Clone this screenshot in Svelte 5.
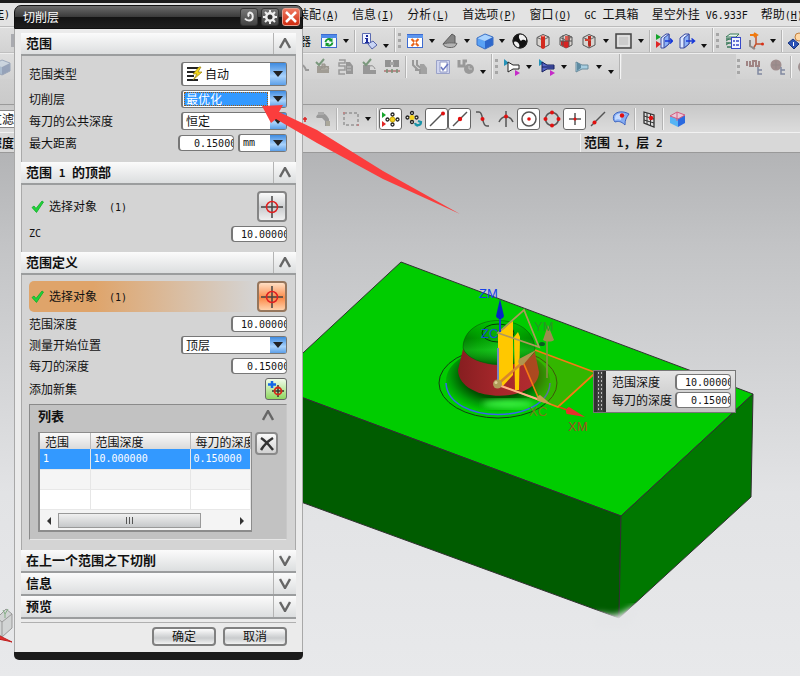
<script lang="ts">
  interface Tool {
    icon?: string;
    text?: string;
    kind?: 'icon' | 'drop' | 'more' | 'sep' | 'end' | 'grip' | 'text' | 'stub' | 'space';
    label?: string;
    on?: boolean;
  }

  const cubeWire =
    '<path d="M3 5.5 9 2.5l6 2.5v8L9 16l-6-3z" fill="#d8d4d0" stroke="#555"/><path d="M3 5.5 9 8l6-3M9 8v8" fill="none" stroke="#666"/>';

  const icons: Record<string, string> = {
    refresh:
      '<rect x="1.5" y="2.5" width="15" height="13" fill="#f4f8ff" stroke="#3d6bd0"/><path d="M1 3h16v3H1z" fill="#4f8bea"/><path d="M5.5 10a3.5 3.5 0 0 1 6-2M12.500 10.500a3.500 3.500 0 0 1-6 2" fill="none" stroke="#14992c" stroke-width="2"/><path d="M12.500 6v4l-4-1zM5.500 14.500v-4l4 1z" fill="#14992c"/>',
    info: '<path d="M2.500 1.500h8v10h-8z" fill="#eef2ff" stroke="#5a6ab0"/><path d="M6 3h2v2H6zM5 6h3v4h1v1H5v-1h1V7H5z" fill="#1c2c9c"/><path d="m8 12 5-3 4 4-5 4z" fill="#c8d4f4" stroke="#5563a8"/>',
    fit: '<rect x="1.500" y="2.500" width="15" height="13" fill="#fff" stroke="#3d6bd0"/><path d="M1 3h16v3H1z" fill="#5c95ee"/><path d="m5.500 7 7 7M12.500 7l-7 7" stroke="#e8641c" stroke-width="2.200"/><path d="M8 9.500h2v2H8z" fill="#fff"/>',
    cone: '<path d="M2 12 11 2l3 2v7l-6 4z" fill="#858585" stroke="#5a5a5a"/><path d="M2 12.500c2-2 11-2 14-1l-2 3c-4 2-10 1-12-2z" fill="#b4b4b4" stroke="#666"/>',
    cube: '<path d="m1 6 8-4 8 3-8 4z" fill="#a9d3ff"/><path d="m1 6 8 3v8l-8-4z" fill="#5aa2f5"/><path d="m9 9 8-4v8l-8 4z" fill="#2e68cc"/><path d="m1 6 8-4 8 3v8l-8 4-8-4z" fill="none" stroke="#3a6fc4"/>',
    ball: '<circle cx="9" cy="9" r="7.500" fill="#111"/><path d="M9 2c5 0 7 4 6 7-2-2-4-1-5 0-2-2-3-5-1-7zM3 10c2-1 4 0 5 2s0 4-1 4c-3-1-4-3-4-6z" fill="#f0f0f0"/><circle cx="9" cy="9" r="7" fill="none" stroke="#222"/>',
    cubeBar: cubeWire + '<path d="M7 4h4v12l-2 1-2-1z" fill="#d32a1e"/><path d="M7 4l2-1 2 1-2 1z" fill="#f48b80"/>',
    cubeRed: cubeWire + '<path d="M4 9h8v6l-3 1-5-3z" fill="#d82222"/><path d="M8 4h5v5H8z" fill="#e05a50"/><path d="M6 3v11M12 3v12M3 9h12" stroke="#555" fill="none"/>',
    cubeCut: cubeWire + '<path d="M8 4h3v10l-2 1-1-2z" fill="#b82a20"/><path d="M5 8h6" stroke="#d04030" stroke-width="2"/>',
    square: '<rect x="1" y="2" width="15" height="14" fill="#ccc" stroke="#444" stroke-width="1.500"/><rect x="3" y="4" width="11" height="10" fill="none" stroke="#eee"/>',
    layerIn: '<path d="m6 6 5-4h3v10l-5 4H6z" fill="#dbe7ff" stroke="#3a4aa0"/><path d="m9 6 5-4v10l-5 4z" fill="#8cb2f8" stroke="#3a4aa0"/><path d="M1 2l5 3-5 3z" fill="#16a52c"/><path d="M1 9l5 3-5 4z" fill="#e02525"/><path d="M10 9h7M15 6.500 17.500 9 15 11.500" stroke="#1436d8" fill="none" stroke-width="1.500"/>',
    layerOut: '<path d="m2 6 5-4h4v10l-5 4H2z" fill="#dbe7ff" stroke="#3a4aa0"/><path d="m6 6 5-4v10l-5 4z" fill="#8cb2f8" stroke="#3a4aa0"/><path d="M8 9h8M13.500 6.500l3 2.500-3 2.500" stroke="#1436d8" fill="none" stroke-width="1.500"/>',
    stack: '<path d="m2 5 4-3h9l-3 3zM2 9l3-2M2 13l3-2" fill="#e8f4ec" stroke="#3a7a5a"/><path d="M2 7h6M2 11h6M3 15h5" stroke="#3a7a5a" stroke-width="1.500"/><rect x="7.500" y="5.500" width="9" height="11" fill="#eef2ff" stroke="#3648c8"/><path d="M9 9h2m1 0h3m-6 4h2m1 0h3" stroke="#3648c8" stroke-width="1.500"/>',
    axes: '<path d="M9 3v9h7M9 12l-3 5" stroke="#c2522f" fill="none" stroke-width="1.500"/><path d="M3 3h6M7 1l3 2-3 2" stroke="#f07a10" fill="none" stroke-width="2"/><path d="M3 8v6l5 3" stroke="#8a8a8a" fill="none" stroke-width="2"/><circle cx="15.500" cy="12" r="1.500" fill="#d83018"/>',
    infoBall: '<path d="m1 11 5-4 6 5-5 5z" fill="#2b53b6" stroke="#18357c"/><path d="M6 10h1v4H6z" fill="#fff"/><circle cx="12" cy="5" r="4" fill="#ffd9a8" stroke="#c08040"/>',
    gTree: '<path d="M3 8h12v7H3z" fill="#a09c94"/><path d="m2 4 3 3 5-6" stroke="#7a987c" fill="none" stroke-width="2"/><path d="M6 12c3-5 7-5 9-1M8 6h3v4H8z" stroke="#95918a" fill="#b0aca4"/>',
    gList: '<path d="M2 2h6v3H2v3h6v4H2v4h6" fill="none" stroke="#9a9a9a" stroke-width="1.500"/><path d="M9 4h4l3 4v8H9z" fill="#979797"/><path d="M10 9h4m-4 3h4" stroke="#c8c8c8"/>',
    gVerify: '<path d="M3 7h7v9H3zM10 12h6v4h-6z" fill="#979797"/><path d="m3 4 3 3 5-6" stroke="#7a987c" fill="none" stroke-width="2"/><path d="M10 8c3-1 4 1 5 3" stroke="#888" fill="none"/>',
    gPost: '<path d="M2 2h6v7H2zM10 2h6v7h-6z" fill="#929292"/><path d="M1 13h16" stroke="#b07070" stroke-width="1.500"/><path d="M4 11v4M9 11v4M14 11v4" stroke="#769076" stroke-width="1.500"/><path d="M7 4h4v3H7z" fill="#a6a6a6"/>',
    gMove: '<path d="M2 2v5l5 5M6 2v5l5 4" stroke="#999" fill="none" stroke-width="2"/><path d="M9 6h4l3 4v6H9z" fill="#a2a2a2"/><path d="M4 12h5v4" stroke="#999" fill="none" stroke-width="2"/>',
    gDoc: '<path d="M2.500 2.500h13v13h-13z" fill="#cfd4ee" stroke="#9aa2c8"/><path d="M6 4h7v10H6z" fill="#fff" stroke="#8f98c4"/><path d="m7 9 2 3 5-6" stroke="#6b78c0" fill="none" stroke-width="1.500"/>',
    gClock: '<path d="M2 2v6h5V3h3" stroke="#999" fill="none" stroke-width="3"/><circle cx="12" cy="11" r="5" fill="#999"/><path d="M12 8v3h3" stroke="#c6c6c6" fill="none"/>',
    horn: '<path d="M1 1v7l5-3z" fill="#2592b8"/><path d="M5 4v10l5-3h6V7h-6z" fill="#fdfdfd" stroke="#222"/><path d="m12 12 5 3-5 3z" fill="#c52ac8"/>',
    hornBlue: '<path d="M1 1v7l5-3z" fill="#2592b8"/><path d="M4 4v10l5-3h7V7H9z" fill="#5866c8" stroke="#16205e"/><path d="M4 9h12" stroke="#16205e"/><path d="m12 12 5 3-5 3z" fill="#c52ac8"/>',
    hornPale: '<path d="M3 4v10l6-3h6V7H9z" fill="#a8cfe2" stroke="#6b8c9c"/><path d="M4 4v9l4-3V7z" fill="#5e8ba2"/>',
    gWave: '<path d="M2 3v5M5 3v5h3V3h3v5h3V3" stroke="#a08484" stroke-width="2" fill="none"/><path d="M13 9v7h4M13 12h4" stroke="#8088a0" stroke-width="1.500" fill="none"/>',
    gGear: '<circle cx="8" cy="7" r="5.500" fill="#a08e8e"/><path d="M4 7h8M8 3v8" stroke="#938888"/><path d="M13 9v7h4M13 12h4" stroke="#8088a0" stroke-width="1.500" fill="none"/>',
    gBlob: '<circle cx="8" cy="9" r="6" fill="#a09292"/>',
    gHook: '<path d="M8 7c3 0 4 2 5 5h3" stroke="#999" fill="none" stroke-width="2"/>',
    redTip: '<path d="M9 9h5M12 7v5" stroke="#d22" stroke-width="1.500"/>',
    gFaucet: '<path d="M2 7c2-5 8-5 11-1l2 3v7h-4v-5l-3-3H3z" fill="#999"/><path d="M4 2h6v3H4z" fill="#aaa"/><path d="M12 11h4v5h-4z" fill="#aaa79a"/>',
    marquee: '<rect x="2" y="3" width="14" height="12" fill="none" stroke="#777" stroke-dasharray="3 2"/><path d="M1 2h2v2H1zM15 14h2v2h-2z" fill="#b88"/>',
    snap: '<path d="M0 2l4 3-4 3z" fill="#16a52c"/><path d="M0 11l4 3-4 3z" fill="#e02525"/><path d="M10.500 4v11M5 9.500h11" stroke="#777"/><g fill="#fff" stroke="#222" stroke-width="1.300"><circle cx="10.500" cy="4.500" r="1.500"/><circle cx="10.500" cy="14.500" r="1.500"/><circle cx="5.500" cy="9.500" r="1.500"/><circle cx="15.500" cy="9.500" r="1.500"/></g><circle cx="10.500" cy="9.500" r="2.500" fill="#f5d31d" stroke="#c8a80c"/>',
    snapSet: '<path d="M7 2v11M2 7h11" stroke="#777"/><g fill="#eee" stroke="#222" stroke-width="1.300"><circle cx="7" cy="3" r="1.500"/><circle cx="7" cy="12" r="1.500"/><circle cx="2.500" cy="7.500" r="1.500"/><circle cx="11.500" cy="7.500" r="1.500"/></g><circle cx="7" cy="7.500" r="2.500" fill="#f5d31d"/><path d="M10 13c1 3 6 3 6-1l-3-1m0 5-3-2" fill="none" stroke="#1893a8" stroke-width="2.200"/>',
    lineEnd: '<path d="M2 16 14 4" stroke="#555" stroke-width="1.500"/><circle cx="15" cy="3.500" r="2" fill="#e01010"/>',
    lineMid: '<path d="M2 16 16 2" stroke="#555" stroke-width="1.500"/><circle cx="9" cy="9" r="2.200" fill="#e01010"/>',
    curve: '<path d="M2 2h3c5 0 2 14 8 14h2" fill="none" stroke="#555" stroke-width="1.500"/><circle cx="8.500" cy="9" r="2" fill="#e01010"/>',
    cross: '<path d="M9 1v16M2 12c3-7 11-7 14 0" fill="none" stroke="#555" stroke-width="1.500"/><circle cx="9" cy="6.500" r="2" fill="#e01010"/>',
    center: '<circle cx="9" cy="9" r="7" fill="none" stroke="#555" stroke-width="1.500"/><circle cx="9" cy="9" r="1.800" fill="#e01010"/>',
    quad: '<circle cx="9" cy="9" r="6.500" fill="none" stroke="#555" stroke-width="1.500"/><g fill="#e01010"><circle cx="9" cy="2.500" r="2"/><circle cx="9" cy="15.500" r="2"/><circle cx="2.500" cy="9" r="2"/><circle cx="15.500" cy="9" r="2"/></g>',
    point: '<path d="M9 3v12M3 9h12" stroke="#555" stroke-width="1.500"/><circle cx="9" cy="9" r="1.500" fill="#e01010"/>',
    onCurve: '<path d="M2 16 16 2" stroke="#555" stroke-width="1.500"/><circle cx="5.500" cy="12.500" r="2" fill="#e01010"/>',
    surface: '<path d="M2 5c3-4 10-4 15-1-3 4-4 6-4 11C9 11 6 11 3 12 1 10 1 7 2 5z" fill="#86adf2" stroke="#3e64c0"/><path d="M4 5c3-2 7-2 9-1-3 2-4 4-4 6-2-1-4-1-6 0 0-2 0-4 1-5z" fill="#c5dbff"/><circle cx="10" cy="5.500" r="2.200" fill="#e01010"/>',
    mesh: '<path d="m4 2 10 3v12L4 13z" fill="#ddd" stroke="#333" stroke-width="1.300"/><path d="m7 3v11M10.500 4v12M4 6l10 3M4 10l10 3" stroke="#333"/><circle cx="11" cy="8" r="2.200" fill="#e01010"/>',
    shaded: '<path d="m2 6 7-4 8 3-7 4z" fill="#eac6d6"/><path d="m2 6 8 3v8l-8-4z" fill="#56b4f4"/><path d="m10 9 7-4v8l-7 4z" fill="#2b6adf"/><path d="m2 6 7-4 8 3-7 4zM9 2v9" fill="none" stroke="#d65c80"/>'
  };

  const sep: Tool = { kind: 'sep' };
  const drop: Tool = { kind: 'drop' };
  const more: Tool = { kind: 'more' };
  const end: Tool = { kind: 'end' };
  const grip: Tool = { kind: 'grip' };

  const viewTools: Tool[] = [
    { kind: 'text', text: '器' },
    { icon: 'refresh', label: '刷新' }, drop, sep,
    { icon: 'info', label: '对象信息' }, more, end, grip,
    { icon: 'fit', label: '适合窗口' }, drop,
    { icon: 'cone', label: '方位' }, drop,
    { icon: 'cube', label: '着色' }, drop,
    { icon: 'ball', label: '真实着色' },
    { icon: 'cubeBar', label: '剖切截面' },
    { icon: 'cubeRed', label: '编辑截面' },
    { icon: 'cubeCut', label: '显示截面' }, drop,
    { icon: 'square', label: '背景' }, drop, sep,
    { icon: 'layerIn', label: '移动至图层' },
    { icon: 'layerOut', label: '图层设置' }, more, end, grip,
    { icon: 'stack', label: '图层' },
    { icon: 'axes', label: '坐标系' }, drop, sep,
    { icon: 'infoBall', label: '信息' }
  ];

  const camTools: Tool[] = [
    { kind: 'stub', icon: 'gHook' },
    { icon: 'gTree', label: '生成刀轨' },
    { icon: 'gList', label: '列出刀轨' },
    { icon: 'gVerify', label: '确认刀轨' },
    { icon: 'gPost', label: '机床仿真' }, sep,
    { icon: 'gMove', label: '后处理' },
    { icon: 'gDoc', label: '车间文档' },
    { icon: 'gClock', label: '进给率' }, more, end, grip,
    { icon: 'horn', label: '创建刀具' }, drop,
    { icon: 'hornBlue', label: '创建工序' }, drop,
    { icon: 'hornPale', label: '创建几何体' }, drop, more, end,
    { kind: 'space' }, grip,
    { icon: 'gWave', label: '分析' },
    { icon: 'gGear', label: '工件' }, sep,
    { icon: 'gBlob', label: '更多' }
  ];

  const snapTools: Tool[] = [
    { kind: 'stub', icon: 'redTip' },
    { icon: 'gFaucet', label: '选择意图' }, sep,
    { icon: 'marquee', label: '矩形选择' }, drop, sep,
    { icon: 'snap', label: '启用捕捉点', on: true },
    { icon: 'snapSet', label: '清除捕捉点' },
    { icon: 'lineEnd', label: '端点', on: true },
    { icon: 'lineMid', label: '中点', on: true },
    { icon: 'curve', label: '控制点' },
    { icon: 'cross', label: '交点' },
    { icon: 'center', label: '圆弧中心', on: true },
    { icon: 'quad', label: '象限点' },
    { icon: 'point', label: '现有点', on: true },
    { icon: 'onCurve', label: '点在曲线上' },
    { icon: 'surface', label: '点在面上' }, sep,
    { icon: 'mesh', label: '小平面顶点' }, sep,
    { icon: 'shaded', label: '着色视图' }
  ];

  const menus = [
    { text: '装配', key: 'A' },
    { text: '信息', key: 'I' },
    { text: '分析', key: 'L' },
    { text: '首选项', key: 'P' },
    { text: '窗口', key: 'O' },
    { before: 'GC ', text: '工具箱' },
    { text: '星空外挂', after: ' V6.933F' },
    { text: '帮助', key: 'H' }
  ];

  let cutDepth = $state('  0.150000');
  let topZc = $state(' 10.000000');
  let rangeDepth = $state(' 10.000000');
  let perCut = $state('  0.150000');

  const rows = [{ id: '1', depth: '10.000000', cut: '0.150000' }];
  const closed = ['在上一个范围之下切削', '信息', '预览'];
</script>

{#snippet glyph(name: string)}
  <svg width="18" height="18" viewBox="0 0 18 18" aria-hidden="true">{@html icons[name]}</svg>
{/snippet}

{#snippet tools(list: Tool[])}
  {#each list as t}
    {#if t.kind === 'text'}
      <span class="cell-text">{t.text}</span>
    {:else if t.kind === 'stub'}
      <span class="stub">{@render glyph(t.icon ?? '')}</span>
    {:else if t.kind === 'drop' || t.kind === 'more'}
      <button type="button" class="drop" class:low={t.kind === 'more'} aria-label="更多选项"></button>
    {:else if t.kind}
      <span class={t.kind}></span>
    {:else}
      <button type="button" class="tool" class:on={t.on} aria-label={t.label}>{@render glyph(t.icon ?? '')}</button>
    {/if}
  {/each}
{/snippet}

{#snippet caret(open: boolean)}
  <svg class="caret" width="12" height="11" viewBox="0 0 12 11" aria-hidden="true">
    <path d={open ? 'M1 10 6 1l5 9' : 'M1 1l5 9 5-9'} fill="none" stroke="#666" stroke-width="2.400" />
  </svg>
{/snippet}

{#snippet header(before: string, num: string, after: string, open: boolean)}
  <button type="button" class="head" aria-expanded={open}>
    <span class="head-text">{before}{#if num}<span class="num">{num}</span>{/if}{after}</span>
    <span class="head-caret">{@render caret(open)}</span>
  </button>
{/snippet}

{#snippet target()}
  <svg width="22" height="22" viewBox="0 0 22 22" aria-hidden="true">
    <path d="M11 0v22M0 11h22" stroke="#444" stroke-width="1.500" />
    <circle cx="11" cy="11" r="5.500" fill="none" stroke="#e02020" stroke-width="1.500" />
  </svg>
{/snippet}

{#snippet check()}
  <svg class="check" width="13" height="13" viewBox="0 0 13 13" aria-hidden="true">
    <path d="M1 7.500 3 6l2 2.500L11 1l1.500 1L5.500 12.500z" fill="#1fd63a" stroke="#12a828" stroke-width=".8" />
  </svg>
{/snippet}

<div class="app">
  <nav class="bar menubar">
    <div class="edge"><a href="#edit" class="mono">(<u>E</u>)</a></div>
    <div class="main menus">
      {#each menus as m}
        <a href="#menu">{#if m.before}<span class="mono">{m.before}</span>{/if}{m.text}{#if m.key}<span class="mono">(<u>{m.key}</u>)</span>{/if}{#if m.after}<span class="mono">{m.after}</span>{/if}</a>
      {/each}
    </div>
  </nav>
  <div class="bar tools">
    <div class="edge"><span class="edge-box"></span></div>
    <div class="main">{@render tools(viewTools)}</div>
  </div>
  <div class="bar tools line">
    <div class="edge faded">{@render glyph('cube')}</div>
    <div class="main">{@render tools(camTools)}</div>
  </div>
  <div class="bar blank"></div>
  <div class="bar snap">
    <div class="edge"><span class="filter">过滤</span></div>
    <div class="main">{@render tools(snapTools)}</div>
  </div>
  <div class="bar status">
    <div class="edge"><b>深度</b></div>
    <div class="main"><b class="cue">范围<span class="num">{' 1'}</span>，层<span class="num">{' 2'}</span></b></div>
  </div>

  <main class="view">
    <svg class="scene" viewBox="0 153 800 523" aria-label="模型">
      <defs>
        <linearGradient id="dome" x1="0" x2="1">
          <stop offset="0" stop-color="#006600" />
          <stop offset=".2" stop-color="#009000" />
          <stop offset=".5" stop-color="#10b414" />
          <stop offset=".8" stop-color="#009800" />
          <stop offset="1" stop-color="#007400" />
        </linearGradient>
        <linearGradient id="domeTop" x1="0" x2="0" y1="0" y2="1">
          <stop offset="0" stop-color="#00c400" />
          <stop offset=".4" stop-color="#00a400" stop-opacity=".4" />
          <stop offset=".66" stop-color="#20d826" stop-opacity=".5" />
          <stop offset="1" stop-color="#005000" stop-opacity=".8" />
        </linearGradient>
        <linearGradient id="wall" x1="0" x2="1">
          <stop offset="0" stop-color="#861e20" />
          <stop offset=".45" stop-color="#a3262a" />
          <stop offset="1" stop-color="#b42c30" />
        </linearGradient>
        <radialGradient id="fillet" cx=".5" cy=".42" r=".56">
          <stop offset=".6" stop-color="#005200" />
          <stop offset=".82" stop-color="#009a06" />
          <stop offset="1" stop-color="#00cc00" />
        </radialGradient>
        <filter id="soft"><feGaussianBlur stdDeviation="3" /></filter>
      </defs>

      <g stroke="#303030" stroke-linejoin="round">
        <path d="M401 262 753 394 621 516 290 393V365z" fill="#00cc00" />
        <path d="M290 393 621 516 619 618 290 498z" fill="#005c00" />
        <path d="M621 516 753 394 751 497 619 618z" fill="#007800" />
      </g>
      <path d="M592 616c10-6 16 2 27-2 8-3 13-9 22-8l-12 22h-34z" fill="#e5e6e8" filter="url(#soft)" />

      <ellipse cx="498" cy="383" rx="59" ry="35" fill="none" stroke="#124012" />
      <ellipse cx="498" cy="381" rx="52" ry="33" fill="url(#fillet)" />
      <ellipse cx="508" cy="404" rx="26" ry="5" fill="#38f23e" filter="url(#soft)" />
      <path d="M446 383c2 42 102 42 104 0" fill="none" stroke="#3a62f0" stroke-width="1.500" />
      <path d="M464 345 458 370c1 34 80 34 81 2l-5-24z" fill="url(#wall)" />
      <path d="M463 348c0-37 72-37 72 2-7 22-66 18-72-2z" fill="url(#dome)" />
      <path d="M463 348c0-37 72-37 72 2-7 22-66 18-72-2z" fill="url(#domeTop)" stroke="#0a520a" stroke-width=".5" />
      <ellipse cx="498" cy="333" rx="16" ry="9" fill="none" stroke="#063c06" />

      <path d="M535 350 594 372v3L558 407 540 398 523 362z" fill="#a08a00" fill-opacity=".32" />
      <path d="M535 350 594 372M594 374 558 407 497 384M523 362l15 35" fill="none" stroke="#f57a14" stroke-width="1.700" />
      <path d="M498 334 509 324l4-3v54l-10 11-5-4z" fill="#ffc800" />
      <path d="M514 337l4-5 2 5-1 53h-4z" fill="#ffc800" />
      <path d="M498 348v34" stroke="#7a84c0" stroke-width="2" />
      <path d="M498 333 524 310 539 347z" fill="none" stroke="#b0985c" stroke-width="1.700" />
      <ellipse cx="542" cy="344" rx="3" ry="2" fill="#0b5c20" />
      <path d="M500 303v29" stroke="#1c38d8" stroke-width="2" />
      <path d="M500 299l4 17c-1 4-7 4-8 0z" fill="#0626c4" />
      <path d="M547 340v38" stroke="#8c8a48" stroke-width="1.600" />
      <path d="M548 325l6 15c-2 2-8 2-11 0z" fill="#9c8c50" />
      <path d="M498 384 522 363" stroke="#d9862c" stroke-width="2.500" />
      <path d="M536 350 519 359c-2 4 1 7 4 6z" fill="#b0944e" />
      <path d="M501 386 540 400" stroke="#ffb08c" stroke-width="2" />
      <path d="M552 405 540 395c-3 1-4 4-2 6z" fill="#c6a050" />
      <path d="M559 407 570 411" stroke="#e54012" stroke-width="1.500" />
      <path d="M585 417 569 407c-3 1-4 5-2 7z" fill="#e8302c" />
      <circle cx="497.500" cy="384" r="4.500" fill="#b09a58" />
      <circle cx="496" cy="382.500" r="1.500" fill="#e0cf98" />
      <g class="axis">
        <text x="479" y="298" fill="#1440e8">ZM</text>
        <text x="481" y="338" fill="#1450d8">ZC</text>
        <text x="534" y="331" fill="#2a9426">YM</text>
        <text x="529" y="416" fill="#7a7a18">XC</text>
        <text x="568" y="431" fill="#a04e20">XM</text>
      </g>

      <path d="M-3 618 6 609l6 5v14L2 637l-5-4z" fill="#d2d4d4" stroke="#999" />
      <path d="M-3 618 2 622 12 614M2 622v15" fill="none" stroke="#999" />
      <path d="M-2 635l14 7-4-1-10-2z" fill="#e03030" stroke="#c02020" />
      <path d="M3 610l2 4 3-5M5 614v4" fill="none" stroke="#83ad83" />
    </svg>

    <form class="hud">
      <span class="hud-grip"></span>
      <div class="hud-rows">
        <label for="hud-depth">范围深度</label>
        <input id="hud-depth" class="num-in" bind:value={rangeDepth} />
        <label for="hud-cut">每刀的深度</label>
        <input id="hud-cut" class="num-in" bind:value={perCut} />
      </div>
    </form>
  </main>

  <form class="dialog" aria-label="切削层">
    <header class="title">
      <h1>切削层</h1>
      <button type="button" class="tb" aria-label="重置">
        <svg width="12" height="12" viewBox="0 0 12 12"><path d="M6 1.500c5 0 5 8 0 8-2 0-3-.5-4-2M6 1.500c-1 2-1 3 0 4" fill="none" stroke="#eee" stroke-width="2" /></svg>
      </button>
      <button type="button" class="tb" aria-label="设置">
        <svg width="14" height="14" viewBox="0 0 14 14"><path d="M7 0v14M0 7h14M2 2l10 10M12 2 2 12" stroke="#eee" stroke-width="2" /><circle cx="7" cy="7" r="5" fill="#eee" /><circle cx="7" cy="7" r="2.500" fill="#333" /></svg>
      </button>
      <button type="button" class="tb close" aria-label="关闭">
        <svg width="12" height="12" viewBox="0 0 12 12"><path d="m1 1 10 10M11 1 1 11" stroke="#fff" stroke-width="2.500" /></svg>
      </button>
    </header>

    <div class="content">
      {@render header('范围', '', '', true)}
      <section class="body">
        <div class="row">
          <label for="type">范围类型</label>
          <span class="combo tall">
            <svg width="16" height="16" viewBox="0 0 16 16" aria-hidden="true">
              <path d="M1 2h13M1 6h9M1 10h7M1 14h11" stroke="#222" stroke-width="2" />
              <path d="m13 1-6 7h4l-4 6 9-8h-4l3-5z" fill="#f4d81c" stroke="#998210" stroke-width=".7" />
            </svg>
            <select id="type"><option>自动</option></select>
          </span>
        </div>
        <div class="row">
          <label for="level">切削层</label>
          <span class="combo active"><select id="level"><option>最优化</option></select></span>
        </div>
        <div class="row">
          <label for="common">每刀的公共深度</label>
          <span class="combo"><select id="common"><option>恒定</option></select></span>
        </div>
        <div class="row">
          <label for="max">最大距离</label>
          <input id="max" class="num-in" bind:value={cutDepth} />
          <span class="combo unit"><select id="unit" aria-label="单位"><option>mm</option></select></span>
        </div>
      </section>

      {@render header('范围', ' 1 ', '的顶部', true)}
      <section class="body">
        <div class="row pick">
          <span class="pick-text">{@render check()}<span>选择对象<span class="mono">{'  (1)'}</span></span></span>
          <button type="button" class="pick-btn" aria-label="选择顶部对象">{@render target()}</button>
        </div>
        <div class="row">
          <label for="zc" class="mono">ZC</label>
          <input id="zc" class="num-in" bind:value={topZc} />
        </div>
      </section>

      {@render header('范围定义', '', '', true)}
      <section class="body">
        <div class="row pick current">
          <span class="pick-text">{@render check()}<span>选择对象<span class="mono">{'  (1)'}</span></span></span>
          <button type="button" class="pick-btn" aria-label="选择范围对象">{@render target()}</button>
        </div>
        <div class="row">
          <label for="depth">范围深度</label>
          <input id="depth" class="num-in" bind:value={rangeDepth} />
        </div>
        <div class="row">
          <label for="from">测量开始位置</label>
          <span class="combo"><select id="from"><option>顶层</option></select></span>
        </div>
        <div class="row">
          <label for="cut">每刀的深度</label>
          <input id="cut" class="num-in" bind:value={perCut} />
        </div>
        <div class="row">
          <label for="add">添加新集</label>
          <button id="add" type="button" class="add">
            <svg width="18" height="18" viewBox="0 0 18 18" aria-hidden="true">
              <path d="M5 1v7M1 4.500h8" stroke="#1468e8" stroke-width="2.500" />
              <path d="M11 5v12M5 11h12" stroke="#333" stroke-width="1.500" />
              <circle cx="11" cy="11" r="3.500" fill="none" stroke="#d82818" stroke-width="1.800" />
            </svg>
          </button>
        </div>

        <div class="group">
          <div class="group-head"><h2>列表</h2>{@render caret(true)}</div>
          <div class="group-main">
            <div class="list">
              <table>
                <colgroup><col class="c1" /><col class="c2" /><col /></colgroup>
                <thead>
                  <tr><th>范围</th><th>范围深度</th><th>每刀的深度</th></tr>
                </thead>
                <tbody>
                  {#each rows as r (r.id)}
                    <tr class="sel"><td>{r.id}</td><td>{r.depth}</td><td>{r.cut}</td></tr>
                  {/each}
                  <tr class="alt"><td></td><td></td><td></td></tr>
                  <tr><td></td><td></td><td></td></tr>
                </tbody>
              </table>
              <div class="scroll">
                <button type="button" class="left" aria-label="向左"></button>
                <span class="track"><span class="thumb"><i></i><i></i><i></i></span></span>
                <button type="button" class="right" aria-label="向右"></button>
              </div>
            </div>
            <button type="button" class="del" aria-label="移除">
              <svg width="16" height="16" viewBox="0 0 16 16"><path d="M2 2c5 3 8 7 12 12M14 2C9 5 5 9 2 14" fill="none" stroke="#333" stroke-width="2.500" /></svg>
            </button>
          </div>
        </div>
      </section>

      {#each closed as name}
        {@render header(name, '', '', false)}
      {/each}

      <footer>
        <button type="submit" class="cmd">确定</button>
        <button type="button" class="cmd">取消</button>
      </footer>
    </div>
  </form>

  <svg class="pointer" width="200" height="112" viewBox="0 0 200 112" aria-hidden="true">
    <path d="M1 2 22 1l-4 7 38 18 66 41 77 43-77-35-66-36-41-24-5 4z" fill="#fb3d3d" />
  </svg>
</div>

<style>
  :global(body) {
    margin: 0;
  }
  .app {
    position: relative;
    display: flex;
    flex-direction: column;
    min-height: 100vh;
    overflow: hidden;
    box-sizing: border-box;
    border-top: 3px solid #1c1c1c;
    background: #d6d6d6;
    color: #111;
    font: 12px/16px 'Noto Sans CJK SC', sans-serif;
  }
  .app *,
  .app *::before,
  .app *::after {
    box-sizing: border-box;
  }
  button,
  input,
  select {
    margin: 0;
    padding: 0;
    border: 0;
    border-radius: 0;
    background: none;
    color: inherit;
    font: inherit;
    appearance: none;
  }
  svg {
    display: block;
    flex: none;
  }
  a {
    color: inherit;
    text-decoration: none;
  }
  .mono {
    font: 10px/16px 'DejaVu Sans Mono', monospace;
    white-space: pre;
  }
  .num {
    font: bold 11px/16px 'DejaVu Sans Mono', monospace;
    white-space: pre;
  }

  /* bars */
  .bar {
    display: grid;
    grid-template-columns: 14px 283px 1fr;
    align-items: center;
    background: linear-gradient(#dedede, #d2d2d2);
  }
  .menubar {
    height: 24px;
    background: #e3e3e3;
    border-bottom: 1px solid #bcbcbc;
  }
  .tools {
    height: 26px;
    border-top: 1px solid #efefef;
  }
  .tools.line {
    border-top-color: #eee;
    box-shadow: 0 -1px #c0c0c0;
  }
  .blank {
    height: 26px;
    background: linear-gradient(#d0d0d0, #cacaca);
    border-bottom: 1px solid #9a9a9a;
  }
  .snap {
    height: 28px;
    background: linear-gradient(#c8c8c8, #dcdcdc);
    border-bottom: 1px solid #f2f2f2;
  }
  .status {
    height: 20px;
    background: #d8d8d8;
    border-bottom: 1px solid #999;
  }
  .edge {
    display: flex;
    justify-content: flex-end;
    overflow: hidden;
    white-space: nowrap;
  }
  .menubar .edge {
    padding-right: 4px;
  }
  .edge-box {
    width: 3px;
    height: 13px;
    background: #aaabb0;
  }
  .edge.faded {
    opacity: 0.45;
    filter: grayscale(0.5);
    padding-right: 3px;
  }
  .filter {
    background: #fff;
    border: 1px solid #888;
    border-right: 0;
  }
  .main {
    grid-column: 3;
    display: flex;
    align-items: center;
    min-width: 0;
    overflow: hidden;
    white-space: nowrap;
  }
  .menus {
    gap: 13px;
  }
  .menus a {
    flex: none;
  }
  .main > :global(*) {
    flex: none;
  }
  .cell-text {
    width: 20px;
    padding-left: 2px;
  }
  .stub {
    width: 14px;
    display: flex;
    justify-content: flex-end;
    overflow: hidden;
  }
  .tool {
    width: 23px;
    height: 22px;
    display: grid;
    place-items: center;
  }
  .tool.on {
    background: #fff;
    border: 1px solid #666;
    border-radius: 3px;
  }
  .drop {
    width: 12px;
    height: 18px;
    display: grid;
    place-items: center;
  }
  .drop::after {
    content: '';
    border: 3px solid transparent;
    border-top: 4px solid #111;
    border-bottom: 0;
  }
  .drop.low {
    place-items: end center;
    padding-bottom: 2px;
  }
  .sep,
  .end {
    width: 5px;
    height: 22px;
    background: linear-gradient(90deg, transparent 2px, #b4b4b4 2px, #b4b4b4 3px, #f4f4f4 3px, #f4f4f4 4px, transparent 4px);
  }
  .end {
    height: 25px;
  }
  .grip {
    width: 6px;
    height: 15px;
    border-left: 3px dotted #a6a6a6;
    margin-left: 1px;
    margin-right: -1px;
  }
  .space {
    width: 114px;
    height: 25px;
    background: #cfcfcf;
  }
  .cue {
    margin-left: 283px;
    padding-left: 3px;
    border-left: 1px solid #f2f2f2;
    font-size: 13px;
  }

  /* viewport */
  .view {
    position: relative;
    flex: 1;
    min-height: 523px;
    background: linear-gradient(#b3b4b6, #c3c4c6 18%, #e2e3e5 65%, #e8e9eb);
  }
  .scene {
    width: 100%;
  }
  .axis {
    font: 13px 'Liberation Sans', sans-serif;
  }
  .hud {
    position: absolute;
    left: 593px;
    top: 217px;
    display: flex;
    border: 1px solid #777;
    background: linear-gradient(#e4e4e4, #c2c2c2);
  }
  .hud-grip {
    width: 12px;
    border: solid #333;
    border-width: 0 3px;
    background: radial-gradient(#bbb 1px, #444 1px) 0 0 / 3px 4px;
  }
  .hud-rows {
    display: grid;
    grid-template-columns: auto auto;
    gap: 2px 3px;
    padding: 3px 4px 4px 6px;
  }

  /* dialog */
  .dialog {
    position: absolute;
    left: 14px;
    top: 2px;
    width: 289px;
    border-radius: 7px 7px 5px 5px;
    background: #ebebeb;
    border-bottom: 8px solid #1b1b1b;
  }
  .title {
    display: flex;
    align-items: center;
    gap: 3px;
    height: 24px;
    padding: 0 2px 0 8px;
    border: 1px solid #111;
    border-radius: 7px 7px 0 0;
    background: linear-gradient(#6c6c6c, #3a3a3a 50%, #141414 52%, #1e1e1e);
  }
  h1 {
    flex: 1;
    margin: 0;
    color: #fff;
    font-size: 12px;
    font-weight: 400;
  }
  .tb {
    width: 18px;
    height: 18px;
    display: grid;
    place-items: center;
    border: 1px solid #333;
    border-radius: 3px;
    background: linear-gradient(#777, #444);
  }
  .tb.close {
    border-color: #e8a090;
    background: linear-gradient(#f07860, #d02c10);
  }
  .content {
    padding: 4px 6px 6px;
    border: solid #a8a8a8;
    border-width: 0 1px;
  }
  .head {
    display: flex;
    width: 100%;
    height: 23px;
    border-bottom: 2px solid #9b9d9e;
    background: linear-gradient(#fbfbfb, #dcdedf);
    text-align: left;
  }
  .head-text {
    flex: 1;
    padding-left: 5px;
    font-size: 13px;
    font-weight: 700;
    line-height: 20px;
  }
  .head-caret {
    width: 23px;
    display: grid;
    place-items: center;
    border-left: 1px solid #b4b4b4;
    align-self: stretch;
  }
  .body {
    display: flex;
    flex-direction: column;
    gap: 4px;
    padding: 6px 8px 10px 7px;
    border: solid #a9a9a9;
    border-width: 0 1px;
    background: #d4d4d4;
  }
  .row {
    display: flex;
    align-items: center;
    gap: 4px;
  }
  .row > label {
    flex: 1;
  }
  .num-in {
    width: 56px;
    height: 16px;
    padding-left: 2px;
    border: 1px solid #777;
    border-left-width: 2px;
    border-radius: 4px;
    background: #fff;
    font: 10px/14px 'DejaVu Sans Mono', monospace;
    overflow: hidden;
  }
  .combo {
    position: relative;
    display: flex;
    align-items: center;
    gap: 3px;
    width: 106px;
    height: 18px;
    padding: 1px 18px 1px 3px;
    border: 1px solid #777;
    border-left-width: 2px;
    border-radius: 3px;
    background: #fff;
  }
  .combo::before {
    content: '';
    position: absolute;
    right: 0;
    top: 0;
    bottom: 0;
    width: 16px;
    background: linear-gradient(#3f8be0, #a9d2fb 60%, #5c9fe8);
    pointer-events: none;
  }
  .combo::after {
    content: '';
    position: absolute;
    right: 3px;
    top: calc(50% - 3px);
    border: 5px solid transparent;
    border-top: 6px solid #222;
    border-bottom: 0;
    pointer-events: none;
  }
  .combo.tall {
    height: 24px;
  }
  .combo select {
    flex: 1;
    min-width: 0;
    height: 14px;
    line-height: 14px;
  }
  .combo.tall select {
    height: 20px;
    line-height: 20px;
  }
  .combo.active {
    padding-left: 1px;
  }
  .combo.active select {
    padding-left: 1px;
    border: 1px dotted #a05a10;
    background: #3399ff;
    color: #fff;
    line-height: 12px;
  }
  .combo.unit {
    width: 49px;
  }
  .combo.unit select {
    font: 10px/14px 'DejaVu Sans Mono', monospace;
  }
  .pick {
    justify-content: space-between;
    height: 31px;
    border-radius: 5px;
  }
  .pick.current {
    background: linear-gradient(90deg, #dfa46a 25%, #d4d4d4 88%);
  }
  .pick-text {
    display: flex;
    align-items: center;
    gap: 5px;
    padding-left: 2px;
  }
  .pick-btn {
    width: 30px;
    height: 31px;
    display: grid;
    place-items: center;
    border: 2px solid #858585;
    border-radius: 4px;
    background: linear-gradient(#fafafa, #ccced0 55%, #f0f0f0);
  }
  .current .pick-btn {
    border-color: #96765c;
    background: linear-gradient(#ffdfc4, #fb8a48 55%, #ffd2ac);
  }
  .add {
    width: 22px;
    height: 22px;
    display: grid;
    place-items: center;
    border: 1px solid #666;
    border-radius: 3px;
    background: linear-gradient(#f2fbea, #8ed860);
  }

  /* range list */
  .group {
    padding: 0 8px;
    padding-bottom: 7px;
    border: 1px solid #8a8a8a;
    border-right-color: #c8c8c8;
    border-bottom-color: #e6e6e6;
    background: #c2c2c2;
  }
  .group-head {
    display: flex;
    align-items: center;
    justify-content: space-between;
    height: 27px;
    padding: 0 4px 6px 0;
  }
  h2 {
    margin: 0;
    font-size: 13px;
    line-height: 20px;
  }
  .group-main {
    display: flex;
    align-items: flex-start;
    gap: 3px;
  }
  .list {
    flex: 1;
    min-width: 0;
    overflow: hidden;
    border: 2px solid #8c8c8c;
    border-width: 1px 1px 2px 2px;
    background: #f4f4f4;
  }
  table {
    width: 100%;
    table-layout: fixed;
    border-collapse: collapse;
  }
  .c1 {
    width: 50px;
  }
  .c2 {
    width: 100px;
  }
  th,
  td {
    padding: 0 0 0 3px;
    overflow: hidden;
    white-space: nowrap;
    text-align: left;
    border-right: 1px solid #e6e6e6;
  }
  th {
    height: 16px;
    padding-left: 5px;
    font-weight: 400;
    line-height: 15px;
    border-right-color: #bbb;
    background: linear-gradient(#fafafa, #dadada);
  }
  td {
    height: 20px;
    background: #fff;
    border-bottom: 1px solid #e8e8e8;
    font: 10px/16px 'DejaVu Sans Mono', monospace;
  }
  .alt td {
    background: #f5f5f5;
  }
  .sel td {
    background: #3399ff;
    color: #fff;
  }
  .scroll {
    display: flex;
    align-items: center;
    height: 20px;
    padding: 3px 4px 1px;
  }
  .scroll button {
    width: 10px;
    height: 14px;
    display: grid;
    place-items: center;
  }
  .scroll .left::after,
  .scroll .right::after {
    content: '';
    border: 4px solid transparent;
  }
  .scroll .left::after {
    border-right-color: #333;
    border-left-width: 0;
  }
  .scroll .right::after {
    border-left-color: #333;
    border-right-width: 0;
  }
  .track {
    flex: 1;
    padding-left: 4px;
  }
  .thumb {
    display: flex;
    align-items: center;
    justify-content: center;
    gap: 2px;
    width: 80%;
    height: 15px;
    border: 1px solid #999;
    background: linear-gradient(#f0f0f0, #c6c8ca);
  }
  .thumb i {
    width: 1px;
    height: 7px;
    background: #555;
  }
  .del {
    width: 23px;
    height: 23px;
    display: grid;
    place-items: center;
    border: 2px solid #8a8a8a;
    border-radius: 4px;
    background: linear-gradient(#fafafa, #d2d2d2);
  }
  footer {
    display: flex;
    justify-content: flex-end;
    gap: 7px;
    margin-top: 3px;
    padding: 4px 9px 0 0;
    border-top: 1px solid #b0b0b0;
  }
  .cmd {
    width: 64px;
    height: 19px;
    border: 2px solid #808080;
    border-radius: 4px;
    background: linear-gradient(#fcfcfc, #c9cbcd 60%, #f2f2f2);
    line-height: 14px;
  }

  .pointer {
    position: absolute;
    left: 261px;
    top: 101px;
    pointer-events: none;
  }
</style>
